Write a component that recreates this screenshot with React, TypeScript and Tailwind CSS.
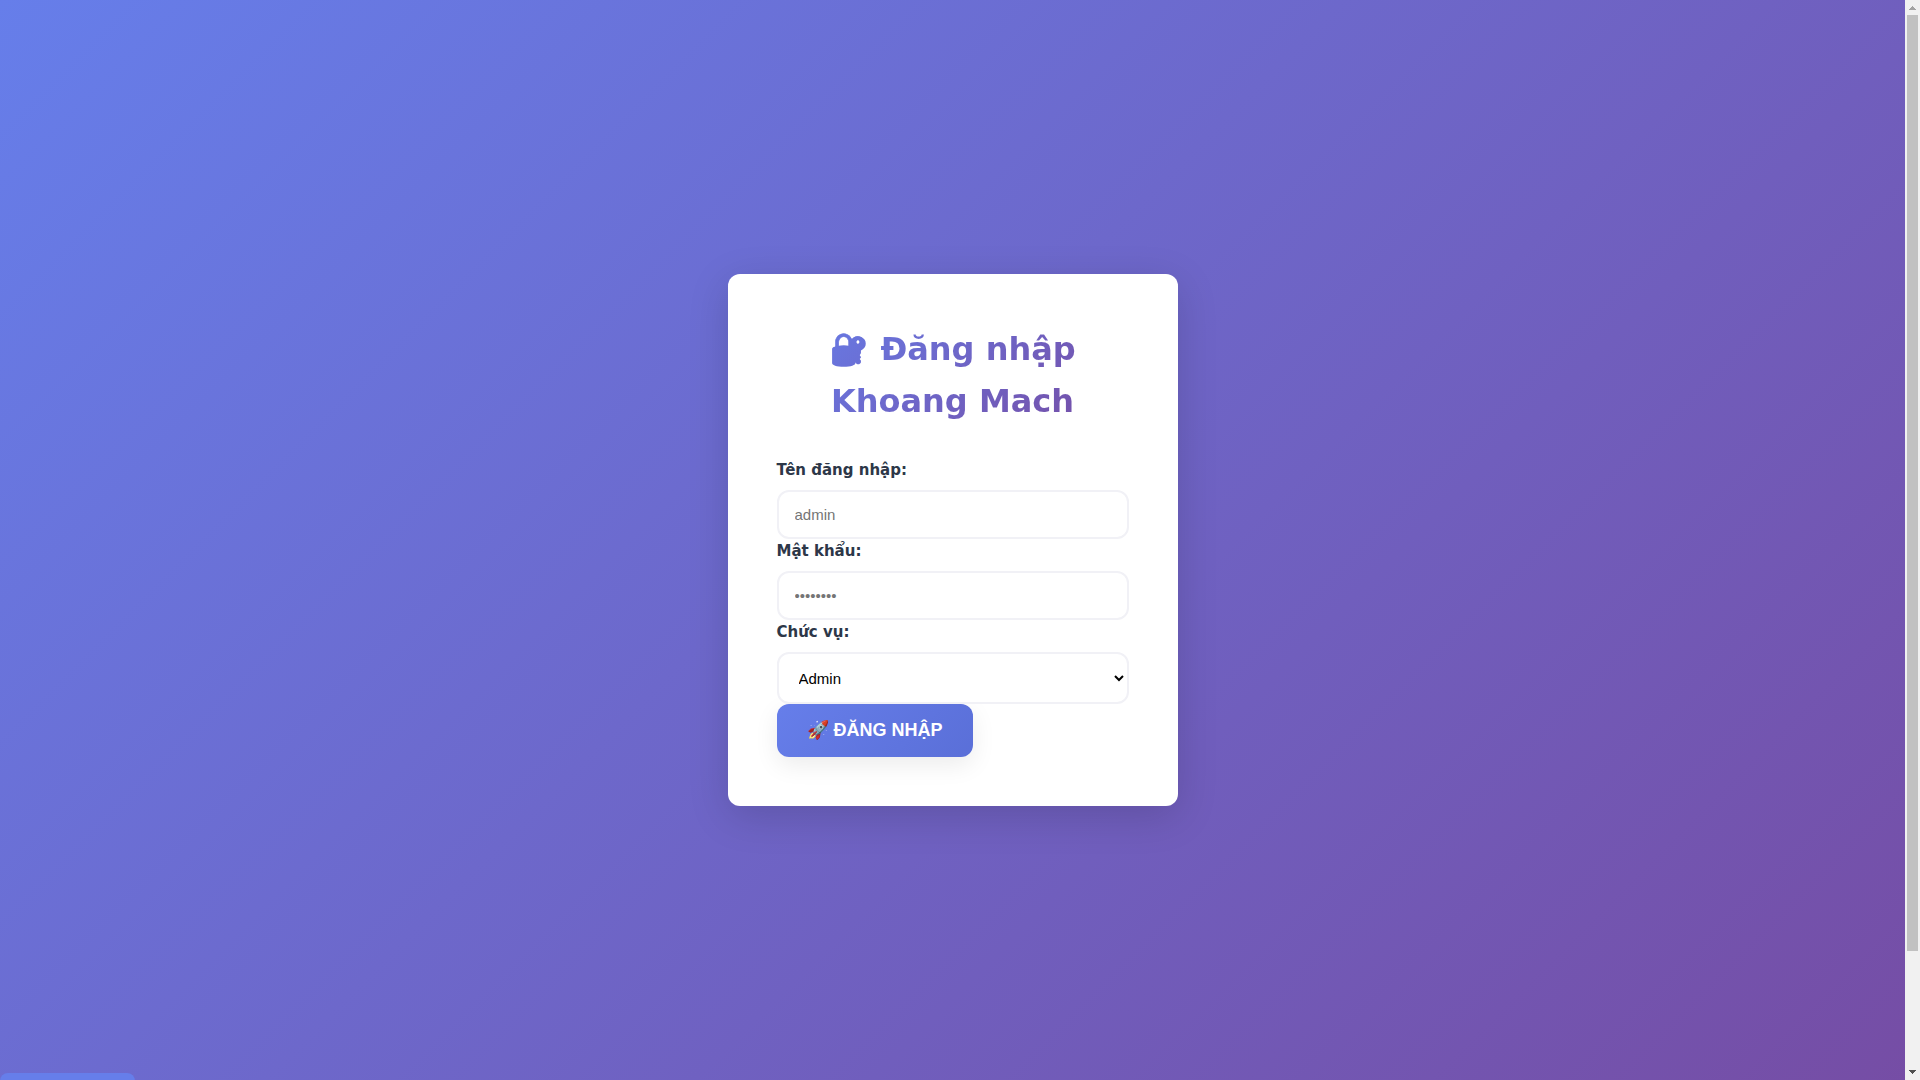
import type { ReactNode } from "react"

const fieldStyle = "w-full px-4 border-2 border-[#f1f1f6] rounded-xl bg-white font-['Liberation_Sans',sans-serif] text-[15px]"

const Field = (props: { id: string, label: string, children: ReactNode }) => {
    return (
        <div className="flex flex-col">
            <label htmlFor={props.id} className="mb-2 leading-6 text-[15px] font-semibold text-[#2d3748]">
                {props.label}
            </label>
            {props.children}
        </div>
    )
}

const LoginCard = () => {
    return (
        <form className="w-full max-w-[450px] p-12 bg-white border border-white/20 rounded-xl shadow-[0_10px_40px_rgba(0,0,0,0.15)]">
            <h1 className="mb-[31px] text-center text-[32px] leading-[52px] font-bold text-transparent bg-clip-text bg-[linear-gradient(135deg,#667eea_0%,#764ba2_100%)]">
                🔐 Đăng nhập Khoang Mach
            </h1>
            <Field id="username" label="Tên đăng nhập:">
                <input id="username" type="text" placeholder="admin" className={fieldStyle + " h-[49px] placeholder:text-[#757575]"} />
            </Field>
            <Field id="password" label="Mật khẩu:">
                <input id="password" type="password" placeholder="••••••••" className={fieldStyle + " h-[49px] placeholder:text-[#757575]"} />
            </Field>
            <Field id="role" label="Chức vụ:">
                <select id="role" className={fieldStyle + " h-[52px] text-black"}>
                    <option>Admin</option>
                </select>
            </Field>
            <button type="button" className="block px-[30px] h-[53px] rounded-xl font-['Liberation_Sans',sans-serif] text-[18px] font-semibold text-white bg-[linear-gradient(135deg,#667eea_0%,#5a6fd8_100%)] shadow-[0_8px_25px_rgba(0,0,0,0.08)]">
                🚀 ĐĂNG NHẬP
            </button>
        </form>
    )
}

const ScrollBar = () => {
    return (
        <div aria-hidden="true" className="w-[15px] shrink-0 flex flex-col items-center bg-[#f1f1f1]">
            <svg className="size-[15px] shrink-0" viewBox="0 0 15 15" shapeRendering="crispEdges">
                <path d="M7 6h1v1h1v1h1v1h1v1H4V9h1V8h1V7h1z" fill="#a3a3a3" />
            </svg>
            <div className="w-[11px] grow-[936] bg-[#c1c1c1]" />
            <div className="grow-[114]" />
            <svg className="size-[15px] shrink-0" viewBox="0 0 15 15" shapeRendering="crispEdges">
                <path d="M4 5h7v1h-1v1H9v1H8v1H7V8H6V7H5V6H4z" fill="#505050" />
            </svg>
        </div>
    )
}

const App = () => {
    return (
        <div className="h-screen flex overflow-hidden font-['DejaVu_Sans',sans-serif]">
            <div className="grow overflow-y-auto">
                <div className="bg-[linear-gradient(135deg,#667eea_0%,#764ba2_100%)]">
                    <main className="min-h-screen flex items-center justify-center">
                        <LoginCard />
                    </main>
                    <footer className="h-[131px]">
                        <div className="relative -top-[7px] w-[135px] h-12 rounded-lg bg-[#667eea]" />
                    </footer>
                </div>
            </div>
            <ScrollBar />
        </div>
    )
}

export default App
